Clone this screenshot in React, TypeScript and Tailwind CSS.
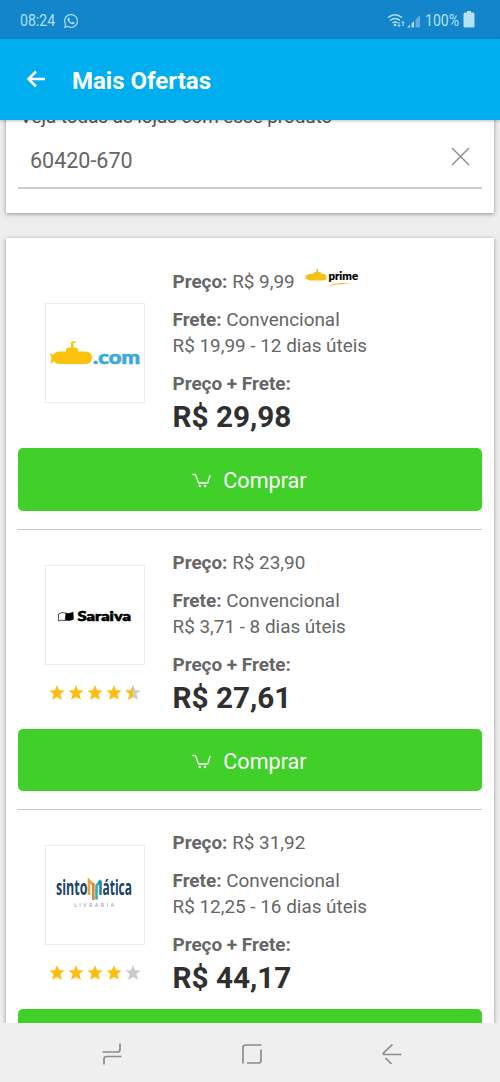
import type { ReactNode } from "react";
import { FaWhatsapp } from "react-icons/fa";

type Offer = {
  id: string;
  logo: ReactNode;
  rating?: number;
  price: string;
  prime?: boolean;
  shipping: string;
  total: string;
};

function SubmarinoLogo() {
  return (
    <svg width="100" height="100" viewBox="0 0 100 100">
      <g fill="#fbc30d">
        <rect x="8" y="48.5" width="39" height="12.500" rx="6" />
        <path d="M5 50l6 3v4l-6 4 1.500-5.500z" />
        <path d="M21 50v-3q0-2.500 3-2.500h2V40q0-1.500 1.500-1.500H31V40h-2.500v4.500H30q3 0 3 2.500v3z" />
      </g>
      <text x="48" y="60.5" textLength="47" lengthAdjust="spacingAndGlyphs" fill="#3fa9db" stroke="#3fa9db" strokeWidth=".7" fontFamily="Lato, sans-serif" fontWeight="900" fontSize="19">.com</text>
    </svg>
  );
}

function SaraivaLogo() {
  return (
    <svg width="100" height="100" viewBox="0 0 100 100">
      <path d="M13.500 49q3-2.500 7.500-.8l-.9 7.500q-3.500-1.500-6.500.3z" fill="#fff" stroke="#222" strokeWidth=".8" />
      <path d="M21 47.800q3.500 1 7.300-1l.5 7.500q-4.500 2.500-8.600 1z" fill="#000" />
      <text x="32.500" y="56" textLength="53.500" lengthAdjust="spacingAndGlyphs" fontFamily="Lato, sans-serif" fontWeight="900" fontSize="13" stroke="#000" strokeWidth=".6">Saraiva</text>
    </svg>
  );
}

function SintomaticaLogo() {
  return (
    <svg width="100" height="100" viewBox="0 0 100 100">
      <g fill="#174468" fontFamily="'Open Sans', sans-serif" fontWeight="700" fontSize="22">
        <text x="11" y="50" textLength="31.500" lengthAdjust="spacingAndGlyphs">sinto</text>
        <text x="57.500" y="50" textLength="29.500" lengthAdjust="spacingAndGlyphs">ática</text>
      </g>
      <g fill="none" strokeWidth="2.600">
        <path d="M44 50V35.500l5 5" stroke="#e8a33d" />
        <path d="M48.300 38v17" stroke="#d9863a" />
        <path d="M51.500 54.500V41l4.200-6" stroke="#2bb0b5" />
        <path d="M55.500 36v14" stroke="#1d87a5" />
      </g>
      <text x="29" y="62" textLength="40" fill="#8a9299" fontFamily="'Open Sans', sans-serif" fontSize="5.500">LIVRARIA</text>
    </svg>
  );
}

function PrimeLogo() {
  return (
    <svg width="54" height="20" viewBox="0 0 54 20" className="-mt-2 ml-2.5">
      <g fill="#f3c117">
        <rect x="2" y="6" width="19.500" height="6.500" rx="3.200" />
        <path d="M0 7.500l5-.5v4.500l-5-.5 1-2zM8 6.500q0-2.500 2.500-2.500h1V1h1.500v3h1q3 0 3 2.500z" />
      </g>
      <text x="23.500" y="12" textLength="29.500" lengthAdjust="spacingAndGlyphs" fontFamily="Lato, sans-serif" fontWeight="900" fontSize="11" stroke="#000" strokeWidth=".2">prime</text>
      <path d="M23 18.500q10-5.500 23-2.500-12-1.200-23 2.500z" fill="#f0b429" />
    </svg>
  );
}

const STAR = "M8 0l2.100 5.200 5.500.3-4.200 3.600 1.500 5.700L8 12l-4.900 2.800 1.500-5.700L.4 5.500l5.500-.3z";
const HALF_STAR = "M8 0v12l-4.900 2.800 1.500-5.700L.4 5.500l5.500-.3z";

function Stars({ rating }: { rating: number }) {
  return (
    <div className="mt-5 mb-0.5 flex gap-[3px]">
      {[0, 1, 2, 3, 4].map((i) => (
        <svg key={i} width="16" height="15" viewBox="0 0 16 15">
          <path d={STAR} fill={rating >= i + 1 ? "#fdbd10" : "#cbcbd0"} />
          {rating === i + 0.5 && <path d={HALF_STAR} fill="#fdbd10" />}
        </svg>
      ))}
    </div>
  );
}

function CartIcon() {
  return (
    <svg width="19" height="16" viewBox="0 0 19 16" fill="none" stroke="#fff" strokeWidth="1.300" strokeLinecap="round" strokeLinejoin="round">
      <path d="M.8 1.500h2.700l3 8.500h9.200l2.300-7.500" />
      <circle cx="7.800" cy="13" r="1.300" fill="#fff" stroke="none" />
      <circle cx="13" cy="13" r="1.300" fill="#fff" stroke="none" />
    </svg>
  );
}

const offers: Offer[] = [
  { id: "submarino", logo: <SubmarinoLogo />, price: "R$ 9,99", prime: true, shipping: "R$ 19,99 - 12 dias úteis", total: "R$ 29,98" },
  { id: "saraiva", logo: <SaraivaLogo />, rating: 4.5, price: "R$ 23,90", shipping: "R$ 3,71 - 8 dias úteis", total: "R$ 27,61" },
  { id: "sintomatica", logo: <SintomaticaLogo />, rating: 4, price: "R$ 31,92", shipping: "R$ 12,25 - 16 dias úteis", total: "R$ 44,17" },
];

function OfferItem({ offer }: { offer: Offer }) {
  return (
    <section className="border-b border-[#c6c6c6] pt-5">
      <div className="flex items-center">
        <div className="flex w-[154.500px] flex-col items-center pb-px">
          <div className="size-[100px] border border-[#ebebeb] [&>svg]:-m-px">{offer.logo}</div>
          {offer.rating && <Stars rating={offer.rating} />}
        </div>
        <div className="text-[18.900px] leading-[26px] text-[#666]">
          <p className="flex h-[26px] items-center">
            <span><b>Preço:</b> {offer.price}</span>
            {offer.prime && <PrimeLogo />}
          </p>
          <p className="mt-3"><b>Frete:</b> Convencional</p>
          <p>{offer.shipping}</p>
          <p className="mt-3 font-bold">Preço + Frete:</p>
          <p className="text-[29.700px] leading-10 font-bold text-[#303030]">{offer.total}</p>
        </div>
      </div>
      <button className="mt-[11px] mb-[18px] flex h-[62.500px] w-full items-center justify-center gap-3 rounded-[5px] bg-[#41cf2a] pt-1 pr-px text-[21.600px] text-white">
        <CartIcon />
        Comprar
      </button>
    </section>
  );
}

export default function App() {
  return (
    <div className="flex h-[1082px] w-[500px] flex-col overflow-hidden bg-[#ededed] font-[Roboto,sans-serif]">
      <div className="flex h-[39px] shrink-0 items-center bg-[#1285cb] pt-0.5 pr-[25px] pl-5 text-base text-[#b5e0f8]">
        <span className="w-[43px] origin-left scale-x-[0.88]">08:24</span>
        <FaWhatsapp className="size-4" />
        <svg className="ml-auto" width="35" height="16" viewBox="0 0 35 16" fill="none" stroke="currentColor" strokeWidth="1.400">
          <path d="M1 4.500q7-5.500 14 0M3 7.500q5-4 10 0M5.500 10q2.500-2 5 0" />
          <circle cx="8" cy="12" r="1.300" fill="currentColor" stroke="none" />
          <path d="M12 9v4.500m-1.500-1.500l1.500 1.500 1.500-1.500M16 13V8.500m-1.500 1.500l1.500-1.500 1.500 1.500" strokeWidth="1" />
          <path d="M20 14.500l3-3v3zM24.500 14.500v-4l2.500-2.500v6.500z" fill="currentColor" stroke="none" />
          <path d="M28.500 14.500v-8l4.500-4.500v12.500z" fill="#5fafe0" stroke="none" />
        </svg>
        <span className="ml-[3px] w-[38px] origin-left scale-x-[0.88]">100%</span>
        <svg className="-mt-0.5" width="12" height="17" viewBox="0 0 12 17" fill="currentColor">
          <path d="M4 0h4v1.500h2q1.500 0 1.500 1.500v12q0 1.500-1.500 1.500H2Q.5 16.500.5 15V3Q.5 1.500 2 1.500h2z" />
        </svg>
      </div>

      <header className="z-10 flex h-[81px] shrink-0 items-center bg-[#00aef0] pt-0.5 pl-[27px] text-white shadow-[0_1px_3px_rgba(0,0,0,0.25)]">
        <svg width="18" height="18" viewBox="0 0 18 18" fill="none" stroke="#fff" strokeWidth="2.500" className="-mt-1">
          <path d="M18 9H2M9 1.500L1.500 9 9 16.500" />
        </svg>
        <h1 className="ml-[27px] text-2xl font-bold">Mais Ofertas</h1>
      </header>

      <main className="flex flex-1 flex-col overflow-hidden px-1.5">
        <div className="-mt-4 h-[109px] shrink-0 bg-white px-3 shadow-[0_1px_4px_rgba(0,0,0,0.4)]">
          <p className="px-0.5 pt-px text-[18.800px] leading-6 text-[#555]">Veja todas as lojas com esse produto</p>
          <div className="flex h-[60px] items-center justify-between border-b-2 border-[#cbcbcb] pt-1.5 pr-3 pl-3 text-[21.500px] text-[#666]">
            60420-670
            <svg width="19" height="19" viewBox="0 0 19 19" stroke="#8b8b8b" strokeWidth="1.400" className="-mt-2.5">
              <path d="M1 1l17 17M18 1L1 18" />
            </svg>
          </div>
        </div>

        <div className="mt-[25px] shrink-0 bg-white px-3 pt-[11px] shadow-[0_1px_4px_rgba(0,0,0,0.4)]">
          {offers.map((offer) => (
            <OfferItem key={offer.id} offer={offer} />
          ))}
        </div>
      </main>

      <nav className="z-10 flex h-[59px] shrink-0 items-center justify-between bg-[#efefef] pt-0.5 pr-[98px] pl-[102px]">
        <svg width="20" height="22" viewBox="0 0 20 22" fill="none" stroke="#8c8c8c" strokeWidth="1.700">
          <path d="M.5 9h15q2.500 0 2.500-2.500V.5M19.500 13.500h-15Q2 13.500 2 16v5.500" />
        </svg>
        <svg width="20" height="20" viewBox="0 0 20 20" fill="none" stroke="#8c8c8c" strokeWidth="1.700">
          <path d="M1 19.500V3.500Q1 1 3.500 1H19.500M19 5.500v11q0 2.500-2.500 2.500H5" />
        </svg>
        <svg width="20" height="20" viewBox="0 0 20 20" fill="none" stroke="#8c8c8c" strokeWidth="1.700">
          <path d="M10.500.500L2 8.500Q.5 10.500 2 10.500H19.500M3.500 14l6 6" />
        </svg>
      </nav>
    </div>
  );
}
